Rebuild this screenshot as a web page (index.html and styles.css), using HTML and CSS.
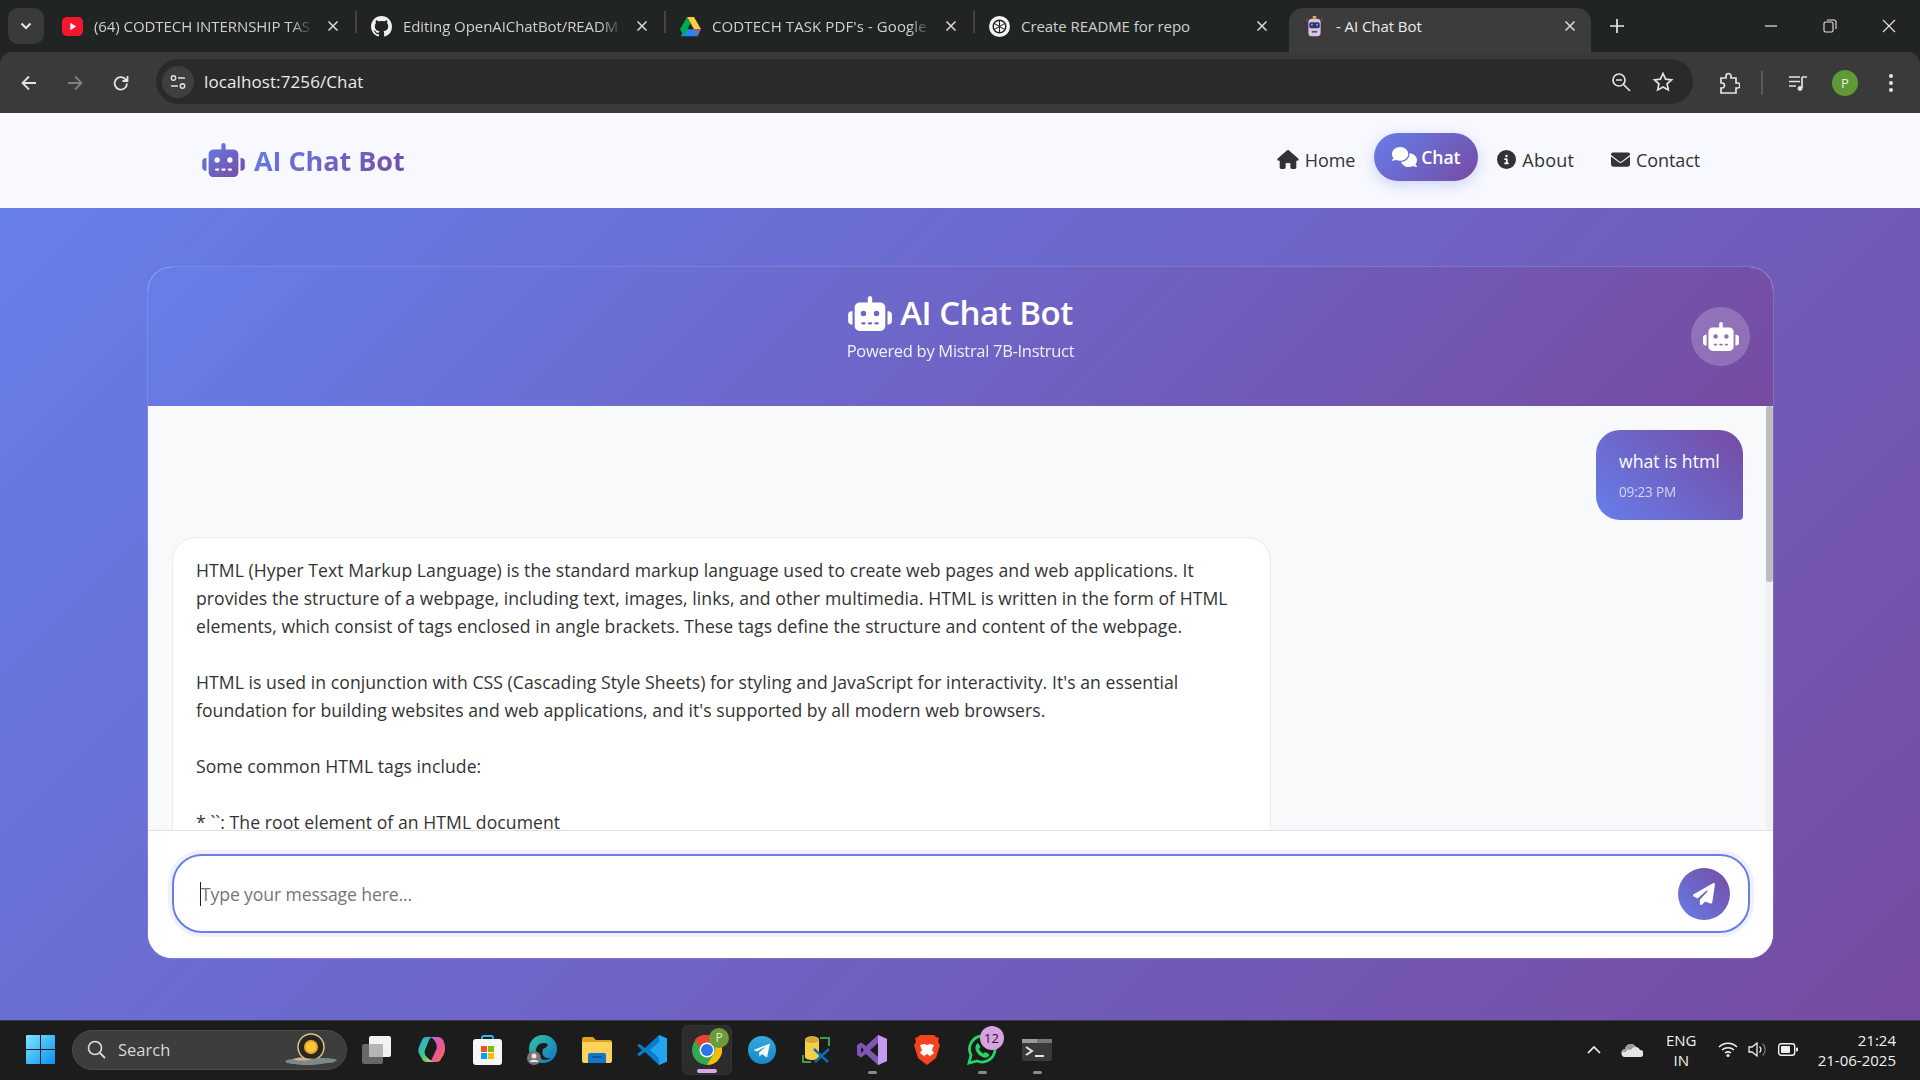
FILE: index.html
```html
<!DOCTYPE html>
<html lang="en">
<head>
<meta charset="utf-8">
<title>- AI Chat Bot</title>
<link rel="stylesheet" href="styles.css">
</head>
<body>
<svg class="defs" width="0" height="0" aria-hidden="true">
  <defs>
    <linearGradient id="brand" x1="0" y1="0" x2="1" y2="1"><stop offset="0" stop-color="#667eea"/><stop offset="1" stop-color="#764ba2"/></linearGradient>
    <symbol id="i-robot" viewBox="0 0 640 512"><path d="M320 0c17.700 0 32 14.300 32 32V96H472c39.800 0 72 32.200 72 72V440c0 39.800-32.200 72-72 72H168c-39.800 0-72-32.200-72-72V168c0-39.800 32.200-72 72-72H288V32c0-17.700 14.300-32 32-32zM208 384c-8.800 0-16 7.200-16 16s7.200 16 16 16h32c8.800 0 16-7.200 16-16s-7.200-16-16-16H208zm96 0c-8.800 0-16 7.200-16 16s7.200 16 16 16h32c8.800 0 16-7.200 16-16s-7.200-16-16-16H304zm96 0c-8.800 0-16 7.200-16 16s7.200 16 16 16h32c8.800 0 16-7.200 16-16s-7.200-16-16-16H400zM264 256a40 40 0 1 0 -80 0 40 40 0 1 0 80 0zm152 40a40 40 0 1 0 0-80 40 40 0 1 0 0 80zM48 224H64V416H48c-26.500 0-48-21.500-48-48V272c0-26.500 21.500-48 48-48zm544 0c26.500 0 48 21.500 48 48v96c0 26.500-21.500 48-48 48H576V224h16z"/></symbol>
    <symbol id="i-home" viewBox="0 0 576 512"><path d="M575.800 255.500c0 18-15 32.100-32 32.100h-32l.7 160.200c0 2.700-.2 5.400-.5 8.100V472c0 22.100-17.900 40-40 40H456c-1.100 0-2.200 0-3.300-.1c-1.400 .1-2.800 .1-4.200 .1H416 392c-22.100 0-40-17.900-40-40V448 384c0-17.700-14.300-32-32-32H256c-17.700 0-32 14.300-32 32v64 24c0 22.100-17.900 40-40 40H160 128.100c-1.500 0-3-.1-4.500-.2c-1.200 .1-2.400 .2-3.600 .2H104c-22.100 0-40-17.900-40-40V360c0-.9 0-1.900 .1-2.800V287.600H32c-18 0-32-14-32-32.100c0-9 3-17 10-24L266.400 8c7-7 15-8 22-8s15 2 21 7L564.800 231.500c8 7 12 15 11 24z"/></symbol>
    <symbol id="i-comments" viewBox="0 0 640 512"><path d="M208 352c114.900 0 208-78.800 208-176S322.900 0 208 0S0 78.800 0 176c0 38.600 14.700 74.300 39.600 103.400c-3.500 9.400-8.700 17.700-14.200 24.700c-4.800 6.200-9.700 11-13.300 14.300c-1.800 1.600-3.300 2.900-4.300 3.700c-.5 .4-.9 .7-1.100 .8l-.2 .2 0 0 0 0C1 327.200-1.400 334.400 .8 340.900S9.100 352 16 352c21.800 0 43.800-5.600 62.100-12.500c9.200-3.500 17.800-7.400 25.300-11.400C134.100 343.300 169.800 352 208 352zM448 176c0 112.300-99.100 196.900-216.500 207C255.800 457.400 336.400 512 432 512c38.200 0 73.900-8.700 104.700-23.900c7.500 4 16 7.900 25.200 11.400c18.300 6.900 40.300 12.500 62.100 12.500c6.900 0 13.100-4.500 15.200-11.100c2.100-6.600-.2-13.800-5.800-17.900l0 0 0 0-.2-.2c-.2-.2-.6-.4-1.100-.8c-1-.8-2.500-2-4.300-3.700c-3.600-3.300-8.500-8.100-13.300-14.300c-5.500-7-10.700-15.400-14.200-24.700c24.900-29 39.600-64.700 39.600-103.400c0-92.800-84.900-168.900-192.600-175.500c.4 5.100 .6 10.300 .6 15.500z"/></symbol>
    <symbol id="i-info" viewBox="0 0 512 512"><path d="M256 512A256 256 0 1 0 256 0a256 256 0 1 0 0 512zM216 336h24V272H216c-13.300 0-24-10.700-24-24s10.700-24 24-24h48c13.300 0 24 10.700 24 24v88h8c13.300 0 24 10.700 24 24s-10.700 24-24 24H216c-13.300 0-24-10.700-24-24s10.700-24 24-24zm40-208a32 32 0 1 1 0 64 32 32 0 1 1 0-64z"/></symbol>
    <symbol id="i-mail" viewBox="0 0 512 512"><path d="M48 64C21.500 64 0 85.500 0 112c0 15.100 7.100 29.300 19.200 38.400L236.800 313.600c11.400 8.500 27 8.500 38.400 0L492.800 150.400c12.100-9.100 19.200-23.300 19.200-38.400c0-26.500-21.500-48-48-48H48zM0 176V384c0 35.300 28.700 64 64 64H448c35.300 0 64-28.700 64-64V176L294.400 339.200c-22.800 17.100-54 17.100-76.800 0L0 176z"/></symbol>
    <symbol id="i-plane" viewBox="0 0 512 512"><path d="M498.100 5.600c10.100 7 15.400 19.100 13.500 31.200l-64 416c-1.500 9.700-7.400 18.200-16 23s-18.900 5.400-28 1.600L284 427.700l-68.500 74.100c-8.900 9.700-22.900 12.900-35.200 8.100S160 493.200 160 480V396.400c0-4 1.500-7.800 4.200-10.700L331.800 202.800c5.800-6.300 5.600-16-.4-22s-15.700-6.400-22-.7L106 360.800 17.700 316.600C7.100 311.300 .3 300.700 0 288.900s5.900-22.800 16.100-28.700l448-256c10.700-6.100 23.900-5.500 34 1.400z"/></symbol>
    <symbol id="i-x" viewBox="0 0 12 12"><path d="M1.500 1.500l9 9M10.500 1.500l-9 9" fill="none" stroke="currentColor" stroke-width="1.500"/></symbol>
  </defs>
</svg>

<header class="browser">
  <div class="tabstrip">
    <div class="tab-search"><svg width="12" height="8" viewBox="0 0 12 8"><path d="M1.500 1.500L6 6l4.500-4.500" fill="none" stroke="#e8e8e8" stroke-width="2"/></svg></div>
    <div class="tab">
      <svg class="fav" viewBox="0 0 20 20"><rect y="1" width="20" height="18" rx="4.500" fill="#f4162c"/><path d="M8 6.500l5.500 3.500L8 13.500z" fill="#fff"/></svg>
      <span class="tab-title">(64) CODTECH INTERNSHIP TAS</span>
      <svg class="tab-x"><use href="#i-x"/></svg>
    </div>
    <div class="tab">
      <svg class="fav" viewBox="0 0 16 16"><path fill="#f0f0f0" d="M8 0C3.580 0 0 3.580 0 8c0 3.540 2.290 6.530 5.470 7.590.4.070.55-.17.55-.38 0-.19-.01-.82-.01-1.490-2.010.37-2.530-.49-2.690-.94-.09-.23-.48-.94-.82-1.130-.28-.15-.68-.52-.01-.53.63-.01 1.080.58 1.230.82.720 1.210 1.870.87 2.330.66.070-.52.280-.87.510-1.070-1.780-.2-3.640-.89-3.640-3.950 0-.87.310-1.590.820-2.150-.080-.2-.360-1.020.080-2.120 0 0 .670-.21 2.200.820.640-.18 1.320-.27 2-.27s1.360.090 2 .27c1.530-1.040 2.200-.82 2.200-.82.440 1.100.160 1.920.080 2.120.510.560.820 1.270.820 2.150 0 3.070-1.870 3.750-3.650 3.950.290.250.540.730.540 1.480 0 1.070-.010 1.930-.010 2.200 0 .210.150.460.550.380A8.010 8.010 0 0 0 16 8c0-4.420-3.580-8-8-8z"/></svg>
      <span class="tab-title">Editing OpenAIChatBot/READM</span>
      <svg class="tab-x"><use href="#i-x"/></svg>
    </div>
    <div class="tab">
      <svg class="fav" viewBox="0 0 24 22"><path fill="#ffcd40" d="M8 0h8l8 14h-8z"/><path fill="#2684fc" d="M5 14h19l-4 8H1z"/><path fill="#00ac47" d="M8 0l4 7-7 15-5-8z"/><path fill="#ea4335" d="M24 14l-4 8-5-8z" opacity=".5"/></svg>
      <span class="tab-title tab-title-wide">CODTECH TASK PDF's - Google</span>
      <svg class="tab-x"><use href="#i-x"/></svg>
    </div>
    <div class="tab tab-last">
      <svg class="fav" viewBox="0 0 20 20"><circle cx="10" cy="10" r="10" fill="#f4f4f4"/><circle cx="10" cy="10" r="6" fill="none" stroke="#222" stroke-width="1.400"/><path d="M10 4v12M4.800 7l10.400 6M15.200 7L4.800 13" stroke="#222" stroke-width="1"/></svg>
      <span class="tab-title">Create README for repo</span>
      <svg class="tab-x"><use href="#i-x"/></svg>
    </div>
    <div class="tab tab-active">
      <svg class="fav" viewBox="0 0 20 24"><rect x="8" y="0" width="4" height="3" fill="#e0b040"/><rect x="3" y="3" width="14" height="20" rx="4" fill="#d9c3ec"/><rect x="4" y="7" width="12" height="7" rx="2" fill="#2b3a6b"/><rect x="6" y="9" width="2" height="2" fill="#7ad"/><rect x="12" y="9" width="2" height="2" fill="#7ad"/><rect x="7" y="17" width="6" height="2" fill="#555"/><rect x="1" y="2" width="1" height="4" fill="#c33"/><rect x="18" y="2" width="1" height="4" fill="#c33"/></svg>
      <span class="tab-title">- AI Chat Bot</span>
      <svg class="tab-x"><use href="#i-x"/></svg>
    </div>
    <div class="tab-new"><svg width="14" height="14" viewBox="0 0 14 14"><path d="M7 0v14M0 7h14" stroke="#e6e6e6" stroke-width="1.700"/></svg></div>
    <div class="win-controls">
      <svg width="12" height="12" viewBox="0 0 12 12"><path d="M0 6h12" stroke="#e6e6e6" stroke-width="1.200"/></svg>
      <svg width="14" height="14" viewBox="0 0 14 14"><rect x="1" y="3" width="9" height="10" rx="1.500" fill="none" stroke="#e6e6e6" stroke-width="1.100"/><path d="M4 1h7a2 2 0 0 1 2 2v7" fill="none" stroke="#e6e6e6" stroke-width="1.100"/></svg>
      <svg width="14" height="14" viewBox="0 0 14 14"><path d="M1 1l12 12M13 1L1 13" stroke="#e6e6e6" stroke-width="1.100"/></svg>
    </div>
  </div>
  <div class="toolbar">
    <div class="nav-btns">
      <svg width="20" height="20" viewBox="0 0 20 20"><path d="M17 10H4M10 3.500L3.500 10l6.500 6.500" fill="none" stroke="#e3e3e3" stroke-width="1.800"/></svg>
      <svg width="20" height="20" viewBox="0 0 20 20"><path d="M3 10h13M10 3.500l6.500 6.500-6.500 6.500" fill="none" stroke="#808080" stroke-width="1.800"/></svg>
      <svg width="20" height="20" viewBox="0 0 20 20"><path d="M16 10.500a6.200 6.200 0 1 1-1.800-4.500L16.500 8M16.500 3v5h-5" fill="none" stroke="#e3e3e3" stroke-width="1.800"/></svg>
    </div>
    <div class="omnibox">
      <div class="site-info"><svg width="18" height="18" viewBox="0 0 18 18"><circle cx="4.500" cy="5" r="2.200" fill="none" stroke="#e3e3e3" stroke-width="1.400"/><path d="M9 5h7M2 13h7" stroke="#e3e3e3" stroke-width="1.400"/><circle cx="13.500" cy="13" r="2.200" fill="none" stroke="#e3e3e3" stroke-width="1.400"/></svg></div>
      <span class="url">localhost:7256/Chat</span>
      <div class="omni-end">
        <svg width="22" height="22" viewBox="0 0 22 22"><circle cx="9" cy="9" r="6" fill="none" stroke="#e3e3e3" stroke-width="1.700"/><path d="M13.500 13.500L20 20M6 9h6" stroke="#e3e3e3" stroke-width="1.700"/></svg>
        <svg width="22" height="22" viewBox="0 0 22 22"><path d="M11 2.500l2.600 5.600 6 .7-4.500 4.100 1.200 6L11 16l-5.300 2.900 1.200-6L2.400 8.800l6-.7z" fill="none" stroke="#e3e3e3" stroke-width="1.700"/></svg>
      </div>
    </div>
    <div class="tool-end">
      <svg class="t-ext" width="22" height="22" viewBox="0 0 22 22"><path d="M3 6h5V4a2.500 2.500 0 0 1 5 0v2h5v5h1.500a2.500 2.500 0 0 1 0 5H18v5H3v-5h1a2.500 2.500 0 0 0 0-5H3z" fill="none" stroke="#e3e3e3" stroke-width="1.700"/></svg>
      <span class="t-sep"></span>
      <svg class="t-media" width="20" height="20" viewBox="0 0 20 20"><path d="M1 4h11M1 8.500h11M1 13h7M14 4v11M14 4h5" fill="none" stroke="#e3e3e3" stroke-width="1.700"/><circle cx="12" cy="15.500" r="2.400" fill="#e3e3e3"/></svg>
      <span class="avatar">P</span>
      <svg class="t-menu" width="6" height="20" viewBox="0 0 6 20"><circle cx="3" cy="3" r="2" fill="#e3e3e3"/><circle cx="3" cy="10" r="2" fill="#e3e3e3"/><circle cx="3" cy="17" r="2" fill="#e3e3e3"/></svg>
    </div>
  </div>
</header>

<nav class="navbar">
  <div class="brand">
    <svg class="brand-icon" fill="url(#brand)" viewBox="0 0 640 512"><path d="M320 0c17.700 0 32 14.300 32 32V96H472c39.800 0 72 32.200 72 72V440c0 39.800-32.200 72-72 72H168c-39.800 0-72-32.200-72-72V168c0-39.800 32.200-72 72-72H288V32c0-17.700 14.300-32 32-32zM208 384c-8.800 0-16 7.200-16 16s7.200 16 16 16h32c8.800 0 16-7.200 16-16s-7.200-16-16-16H208zm96 0c-8.800 0-16 7.200-16 16s7.200 16 16 16h32c8.800 0 16-7.200 16-16s-7.200-16-16-16H304zm96 0c-8.800 0-16 7.200-16 16s7.200 16 16 16h32c8.800 0 16-7.200 16-16s-7.200-16-16-16H400zM264 256a40 40 0 1 0 -80 0 40 40 0 1 0 80 0zm152 40a40 40 0 1 0 0-80 40 40 0 1 0 0 80zM48 224H64V416H48c-26.500 0-48-21.500-48-48V272c0-26.500 21.500-48 48-48zm544 0c26.500 0 48 21.500 48 48v96c0 26.500-21.500 48-48 48H576V224h16z"/></svg>
    <span class="brand-text">AI Chat Bot</span>
  </div>
  <ul class="nav-links">
    <li class="nav-link"><svg class="nl-icon ni-home"><use href="#i-home"/></svg>Home</li>
    <li class="nav-link is-active"><svg class="nl-icon ni-chat"><use href="#i-comments"/></svg>Chat</li>
    <li class="nav-link nav-about"><svg class="nl-icon ni-info"><use href="#i-info"/></svg>About</li>
    <li class="nav-link"><svg class="nl-icon ni-mail"><use href="#i-mail"/></svg>Contact</li>
  </ul>
</nav>

<main class="stage">
  <section class="card">
    <div class="card-head">
      <h1 class="card-title"><svg class="title-icon"><use href="#i-robot"/></svg>AI Chat Bot</h1>
      <p class="card-sub">Powered by Mistral 7B-Instruct</p>
      <div class="bot-avatar"><svg class="bot-avatar-icon"><use href="#i-robot"/></svg></div>
    </div>
    <div class="thread">
      <div class="messages">
        <div class="msg msg-user">
          <div class="msg-text">what is html</div>
          <div class="msg-time">09:23 PM</div>
        </div>
        <div class="msg msg-bot">
          <p class="bot-text">HTML (Hyper Text Markup Language) is the standard markup language used to create web pages and web applications. It<br>provides the structure of a webpage, including text, images, links, and other multimedia. HTML is written in the form of HTML<br>elements, which consist of tags enclosed in angle brackets. These tags define the structure and content of the webpage.<br><br>HTML is used in conjunction with CSS (Cascading Style Sheets) for styling and JavaScript for interactivity. It's an essential<br>foundation for building websites and web applications, and it's supported by all modern web browsers.<br><br>Some common HTML tags include:<br><br>* ``: The root element of an HTML document</p>
        </div>
      </div>
      <div class="scroll-track"><div class="scroll-thumb"></div></div>
    </div>
    <form class="composer">
      <div class="composer-box">
        <span class="caret"></span>
        <input class="composer-input" type="text" placeholder="Type your message here...">
        <button class="send" type="button" aria-label="Send"><svg class="send-icon"><use href="#i-plane"/></svg></button>
      </div>
    </form>
  </section>
</main>

<footer class="taskbar">
  <div class="tb-cell">
    <svg width="29" height="29" viewBox="0 0 29 29"><defs><linearGradient id="win" x1="0" y1="0" x2="1" y2="1"><stop offset="0" stop-color="#7fe6ff"/><stop offset="1" stop-color="#0a90ee"/></linearGradient></defs><path fill="url(#win)" d="M0 1a1 1 0 0 1 1-1h13v14H0zM15 0h13a1 1 0 0 1 1 1v13H15zM0 15h14v14H1a1 1 0 0 1-1-1zM15 15h14v13a1 1 0 0 1-1 1H15z"/></svg>
  </div>
  <div class="tb-search">
    <svg width="19" height="19" viewBox="0 0 19 19"><circle cx="8" cy="8" r="6.500" fill="none" stroke="#ddd" stroke-width="1.600"/><path d="M12.800 12.800L18 18" stroke="#ddd" stroke-width="1.800"/></svg>
    <span class="tb-search-text">Search</span>
    <svg class="tb-sun" width="54" height="34" viewBox="0 0 54 34"><circle cx="27" cy="14" r="13" fill="#2a2622" stroke="#dcc08e" stroke-width="1.500"/><circle cx="27" cy="14" r="7" fill="#f5a623"/><circle cx="27" cy="14" r="5" fill="#ffc83d"/><path d="M1 28c6-3 11-1 16-3 5 3 10-1 14 1 5-2 9 0 13-1 3 1 6 0 9 2-3 3-7 3-10 3-9 2-25 3-32 1-4 0-8 0-10-3z" fill="#7d8a8c"/><path d="M8 26c5-1 9-2 12-1l8 1c-5 2-14 2-20 0z" fill="#d2b48c"/></svg>
  </div>
  <div class="tb-cell tb-after">
    <svg width="30" height="28" viewBox="0 0 30 28"><rect x="0" y="8" width="21" height="20" rx="2" fill="#686868"/><rect x="7" y="0" width="22" height="21" rx="2" fill="#f2f2f2"/><rect x="7" y="8" width="14" height="13" fill="#b5b5b5"/></svg>
  </div>
  <div class="tb-cell">
    <svg width="28" height="27" viewBox="0 0 28 27"><defs><linearGradient id="cp1" x1="0" y1="0" x2="1" y2="1"><stop offset="0" stop-color="#2f9cf0"/><stop offset=".5" stop-color="#35c98f"/><stop offset="1" stop-color="#f5c542"/></linearGradient><linearGradient id="cp2" x1="0" y1="0" x2="1" y2="1"><stop offset="0" stop-color="#b866e8"/><stop offset=".6" stop-color="#f0558a"/><stop offset="1" stop-color="#f58a3c"/></linearGradient></defs><path fill="url(#cp2)" d="M13 1h7c3 0 5 2 6 5 1.500 4 1.500 9-.5 13l-2 3c-1 3-3 4-5 4h-6l6-13c1-4-1-9-6-12z"/><path fill="url(#cp1)" d="M8 1h7c-2 0-3 1-4 3L7 14c-1 3 0 6 3 8 1 1 3 3 6 4H9c-3 0-5-2-6-5-1-2-4-5-2-10 1-3 2-5 3-7 1-2 2-3 4-3z"/></svg>
  </div>
  <div class="tb-cell">
    <svg width="29" height="30" viewBox="0 0 29 30"><path d="M9 5V2.500A1.500 1.500 0 0 1 10.500 1h8A1.500 1.500 0 0 1 20 2.500V5" fill="none" stroke="#35b6f2" stroke-width="1.800"/><rect y="4" width="29" height="26" rx="3" fill="#f6f6f6"/><rect x="8" y="11" width="6" height="6" fill="#f25022"/><rect x="15" y="11" width="6" height="6" fill="#7fba00"/><rect x="8" y="18" width="6" height="6" fill="#00a4ef"/><rect x="15" y="18" width="6" height="6" fill="#ffb900"/></svg>
  </div>
  <div class="tb-cell">
    <svg width="30" height="30" viewBox="0 0 30 30"><defs><linearGradient id="edg" x1="0" y1="0" x2="1" y2="1"><stop offset="0" stop-color="#36c6a0"/><stop offset="1" stop-color="#1272c9"/></linearGradient></defs><circle cx="16" cy="14" r="14" fill="url(#edg)"/><path d="M16 14c7-3 5-6 1-6-6 0-9 5-8 10 1 6 9 9 15 5-6 1-10-2-8-9z" fill="#1c1c1c"/><circle cx="7" cy="23" r="7" fill="#777"/><circle cx="7" cy="21" r="2.500" fill="#e8e8e8"/><path d="M2.500 27c1-3 8-3 9 0z" fill="#e8e8e8"/></svg>
  </div>
  <div class="tb-cell">
    <svg width="30" height="27" viewBox="0 0 30 27"><path d="M0 3a2 2 0 0 1 2-2h9l3 3h14a2 2 0 0 1 2 2v3H0z" fill="#d9a31f"/><path d="M0 6h30v19a2 2 0 0 1-2 2H2a2 2 0 0 1-2-2z" fill="#fbd35c"/><path d="M6 19a2 2 0 0 1 2-2h14a2 2 0 0 1 2 2v8H6z" fill="#1177cc"/><path d="M10 21h10" stroke="#0c4f8f" stroke-width="1.500"/></svg>
  </div>
  <div class="tb-cell">
    <svg width="30" height="30" viewBox="0 0 30 30"><path d="M22 0l8 3.500v23L22 30 8 17l-5.500 4L0 19.500 5 15 0 10.500 2.500 9l5.500 4z" fill="#0a7cc9"/><path d="M22 0l8 3.500v23L22 30zM22 7l-9 8 9 8z" fill="#23a5ee" fill-rule="evenodd"/></svg>
  </div>
  <div class="tb-cell tb-running is-open">
    <svg width="30" height="30" viewBox="0 0 30 30"><circle cx="15" cy="15" r="15" fill="#34a853"/><path d="M15 0a15 15 0 0 1 13 7.500H15a7.500 7.500 0 0 0-7 5L2.500 5A15 15 0 0 1 15 0z" fill="#ea4335"/><path d="M28 7.500A15 15 0 0 1 15 30l6.500-11A7.500 7.500 0 0 0 20 7.500z" fill="#fbbc05"/><circle cx="15" cy="15" r="7.500" fill="#fff"/><circle cx="15" cy="15" r="6" fill="#2a73e8"/></svg>
    <span class="tb-badge tb-badge-p">P</span>
  </div>
  <div class="tb-cell">
    <svg width="28" height="28" viewBox="0 0 28 28"><defs><linearGradient id="tg" x1="0" y1="0" x2="0" y2="1"><stop offset="0" stop-color="#36a9e1"/><stop offset="1" stop-color="#1688c7"/></linearGradient></defs><circle cx="14" cy="14" r="14" fill="url(#tg)"/><path d="M5.500 14L22 7.500l-3 14-5-3.500-2.500 2.500-.5-4 7-6-9 5z" fill="#f3f8fc"/></svg>
  </div>
  <div class="tb-cell">
    <svg width="30" height="30" viewBox="0 0 30 30"><path d="M18 3h9v8M9 27H1v-7" fill="none" stroke="#3f9d46" stroke-width="2"/><path d="M3 5c0-5 14-5 14 0v17c0 4-14 4-14 0z" fill="#f4cf48"/><path d="M3 5c0 4 14 4 14 0s-14-4-14 0z" fill="#d6a638"/><path d="M12 14l14 13M27 14L13 27" stroke="#0a6db5" stroke-width="2.400"/></svg>
  </div>
  <div class="tb-cell tb-running">
    <svg width="30" height="30" viewBox="0 0 30 30"><path d="M21 0l9 4v22l-9 4-12-11-5 3.500L0 20V10l4-2.500L9 11z" fill="#7e57b5"/><path d="M21 0l9 4v22l-9 4z" fill="#c39bf0"/><path d="M21 8l-8 7 8 7zM4 12v6l3-3z" fill="#1c1c1c"/></svg>
  </div>
  <div class="tb-cell">
    <svg width="26" height="30" viewBox="0 0 26 30"><path d="M6 0h14l2 2 3 1-1 4 2 3-4 13-9 7-9-7-4-13 2-3-1-4 3-1z" fill="#f5431f"/><path d="M6 10l4-1 3 1 3-1 4 1-2 5 2 3-4 3-3 3-3-3-4-3 2-3z" fill="#fff"/><path d="M10 21l3-2 3 2-3 4z" fill="#f5431f"/></svg>
  </div>
  <div class="tb-cell tb-running">
    <svg width="31" height="31" viewBox="0 0 31 31"><path d="M15.500 2A13 13 0 0 0 4 21L2 29l8-2A13 13 0 1 0 15.500 2z" fill="none" stroke="#25d366" stroke-width="2.800"/><path d="M11 9l2.500 4-1.500 2c1 2 2.500 3.500 4.500 4.500l2-1.500 4 2.500c-1 3-3 3.500-5.500 3-4-1-7.500-4.500-8.500-8.500-.5-3 1-5.500 2.500-6z" fill="#25d366"/></svg>
    <span class="tb-badge tb-badge-n">12</span>
  </div>
  <div class="tb-cell tb-running">
    <svg width="30" height="22" viewBox="0 0 30 22"><rect width="30" height="22" rx="2" fill="#3a3a3a"/><rect width="30" height="4" fill="#9a9a9a"/><rect x="15" width="15" height="4" fill="#777"/><path d="M4 8l6 4-6 4" fill="none" stroke="#e6e6e6" stroke-width="2"/><path d="M13 17h9" stroke="#e6e6e6" stroke-width="2"/></svg>
  </div>
  <div class="tray">
    <svg class="tray-chev" width="16" height="10" viewBox="0 0 16 10"><path d="M2 8l6-6 6 6" fill="none" stroke="#f0f0f0" stroke-width="1.700"/></svg>
    <svg class="tray-cloud" width="22" height="14" viewBox="0 0 22 14"><path d="M5 14a4 4 0 0 1-1-8 6 6 0 0 1 11-2 4.500 4.500 0 0 1 4 3 3.500 3.500 0 0 1 0 7z" fill="#e4e4e4"/><path d="M4 6a6 6 0 0 1 11-2 5 5 0 0 0-5 3C7 6 5 7 5 9H1c0-1 1-3 3-3z" fill="#9b9b9b"/></svg>
    <div class="tray-lang"><span>ENG</span><span>IN</span></div>
    <svg class="tray-wifi" width="20" height="15" viewBox="0 0 20 15"><path d="M1 5c5-5 13-5 18 0M4 8c3.500-3 8.500-3 12 0M7 11c2-1.500 4-1.500 6 0" fill="none" stroke="#f0f0f0" stroke-width="1.500"/><circle cx="10" cy="13.500" r="1.500" fill="#f0f0f0"/></svg>
    <svg class="tray-vol" width="20" height="17" viewBox="0 0 20 17"><path d="M1 6h3l5-4v13l-5-4H1z" fill="none" stroke="#f0f0f0" stroke-width="1.300"/><path d="M11.500 5.500a4 4 0 0 1 0 6" fill="none" stroke="#f0f0f0" stroke-width="1.300"/><path d="M14.500 2.500a8 8 0 0 1 0 12" fill="none" stroke="#777" stroke-width="1.300"/></svg>
    <svg class="tray-batt" width="20" height="13" viewBox="0 0 20 13"><rect x=".7" y=".7" width="16" height="11.600" rx="2.500" fill="none" stroke="#f0f0f0" stroke-width="1.400"/><rect x="3" y="3" width="9" height="7" rx="1" fill="#f0f0f0"/><rect x="18" y="4.500" width="2" height="4" rx="1" fill="#f0f0f0"/></svg>
    <div class="tray-clock"><span>21:24</span><span>21-06-2025</span></div>
  </div>
</footer>
</body>
</html>
```

FILE: styles.css
```css
* { box-sizing: border-box; }
html, body { margin: 0; padding: 0; height: 100%; }
body {
  width: 1920px;
  height: 1080px;
  overflow: hidden;
  display: flex;
  flex-direction: column;
  font-family: "Open Sans", "Noto Sans", "Liberation Sans", sans-serif;
}
.defs { position: absolute; }

/* browser chrome */
.browser { flex: 0 0 113px; background: #202423; display: flex; flex-direction: column; color: #e3e3e3; }
.tabstrip { height: 52px; display: flex; align-items: flex-end; padding-left: 8px; }
.tab-search { width: 36px; height: 36px; margin-bottom: 8px; margin-right: 4px; border-radius: 10px; background: #3a3a3a; display: flex; align-items: center; justify-content: center; }
.tab { width: 309px; height: 44px; display: flex; align-items: center; padding: 0 18px 8px 14px; flex: none; position: relative; font-size: 15px; letter-spacing: -0.07px; color: #cfd0d0; }
.tab::after { content: ""; position: absolute; right: 0; top: 3px; height: 22px; width: 2px; background: #444; }
.tab.tab-last { width: 314px; padding-right: 21px; }
.tab.tab-last::after, .tab.tab-active::after { display: none; }
.tab-active { width: 302px; background: #3c3c3c; border-radius: 14px 14px 0 0; padding-left: 15px; padding-right: 15px; color: #ececec; }
.fav { width: 21px; height: 21px; flex: none; margin-right: 11px; }
.tab-title { flex: 1; overflow: hidden; white-space: nowrap; -webkit-mask-image: linear-gradient(90deg, #000 90%, transparent 100%); mask-image: linear-gradient(90deg, #000 90%, transparent 100%); }
.tab-title-wide { letter-spacing: 0.1px; }
.tab-active .tab-title, .tab-last .tab-title { -webkit-mask-image: none; mask-image: none; }
.tab-x { width: 12px; height: 12px; flex: none; margin-left: 14px; color: #dcdcdc; }
.tab-new { width: 52px; height: 44px; display: flex; align-items: center; justify-content: center; padding-bottom: 8px; }
.win-controls { margin-left: auto; width: 180px; height: 44px; display: flex; align-items: center; justify-content: space-between; padding: 0 24px 8px 25px; }

.toolbar { flex: 1; background: #3a3a3a; border-radius: 12px 12px 0 0; display: flex; align-items: center; padding-left: 19px; }
.nav-btns { display: flex; gap: 26px; width: 137px; align-items: center; }
.omnibox { width: 1537px; height: 45px; margin-top: -2px; border-radius: 23px; background: #2a2a2a; display: flex; align-items: center; padding-left: 6px; padding-right: 19px; }
.site-info { width: 32px; height: 32px; border-radius: 50%; background: #3f3f3f; display: flex; align-items: center; justify-content: center; margin-right: 10px; }
.url { font-size: 17px; letter-spacing: 0.1px; color: #ececec; }
.omni-end { margin-left: auto; display: flex; align-items: center; gap: 20px; }
.tool-end { flex: 1; display: flex; align-items: center; padding-left: 25px; }
.t-ext { margin-right: 21px; }
.t-sep { width: 2px; height: 24px; background: #5a5a5a; margin-right: 25px; }
.t-media { margin-right: 24px; }
.avatar { width: 26px; height: 26px; border-radius: 50%; background: #5f9a36; color: #e9f3df; font-size: 13px; display: flex; align-items: center; justify-content: center; margin-right: 30px; }

/* page */
.navbar { flex: 0 0 95px; background: #f8f9ff; display: flex; align-items: center; justify-content: space-between; padding: 0 202px 2px 202px; }
.brand { display: flex; align-items: center; gap: 9px; }
.brand-icon { width: 43px; height: 34px; display: block; }
.brand-text { font-size: 27px; font-weight: 700; letter-spacing: -0.05px; margin-top: 1px; background: linear-gradient(135deg, #667eea, #764ba2); -webkit-background-clip: text; background-clip: text; color: transparent; }
.nav-links { list-style: none; margin: 0; padding: 0; display: flex; gap: 1px; }
.nav-link { height: 48px; padding: 0 18px; display: flex; align-items: center; gap: 6px; color: #333; font-size: 18px; font-weight: 500; letter-spacing: -0.1px; fill: #333; }
.nav-about { letter-spacing: 0.2px; }
.is-active { color: #fff; fill: #fff; font-size: 17.6px; font-weight: 600; letter-spacing: -0.1px; gap: 4px; border-radius: 24px; background: linear-gradient(135deg, #667eea, #764ba2); box-shadow: 0 4px 15px rgba(102, 126, 234, .3); margin-top: -2.500px; }
.nl-icon { display: block; }
.ni-home { width: 22px; height: 19px; }
.ni-chat { width: 25px; height: 20px; }
.ni-info { width: 19px; height: 19px; }
.ni-mail { width: 19px; height: 19px; }

.stage { flex: 1; min-height: 0; background: linear-gradient(135deg, #667eea 0%, #764ba2 100%); padding: 59px 147px 62px 148px; display: flex; }
.card { flex: 1; min-width: 0; display: flex; flex-direction: column; background: #fff; border-radius: 24px; overflow: hidden; box-shadow: 0 0 0 1px rgba(255, 255, 255, .12); }
.card-head { flex: 0 0 139px; position: relative; background: linear-gradient(135deg, #667eea, #764ba2); color: #fff; display: flex; flex-direction: column; align-items: center; padding-top: 25px; }
.card-title { margin: 0; font-size: 33px; font-weight: 600; line-height: 42px; letter-spacing: -0.5px; display: flex; align-items: center; gap: 8px; }
.title-icon { width: 44px; height: 35px; fill: #fff; display: block; }
.card-sub { margin: 5px 0 0; font-size: 16.5px; line-height: 24px; letter-spacing: -0.3px; opacity: .9; }
.bot-avatar { position: absolute; right: 23px; top: 40px; width: 59px; height: 59px; border-radius: 50%; background: rgba(255, 255, 255, .2); display: flex; align-items: center; justify-content: center; }
.bot-avatar-icon { width: 36px; height: 29px; fill: #fff; }

.thread { flex: 1; min-height: 0; position: relative; }
.messages { height: 100%; overflow: hidden; background: #f8f9fa; padding: 24px 30px 24px 24px; display: flex; flex-direction: column; }
.scroll-track { position: absolute; top: 0; right: 0; bottom: 0; width: 7px; background: #f1f1f1; }
.scroll-thumb { height: 176px; background: #bdbdbd; border-radius: 3px; }
.msg { flex: none; }
.msg-user { align-self: flex-end; padding: 17px 23px 0; height: 90px; width: 147px; border-radius: 24px 24px 4px 24px; background: linear-gradient(45deg, #667eea, #764ba2); color: #fff; white-space: nowrap; }
.msg-text { font-size: 17.6px; line-height: 28px; letter-spacing: 0.05px; }
.msg-time { font-size: 13.6px; line-height: 22px; letter-spacing: -0.2px; opacity: .7; margin-top: 6px; }
.msg-bot { margin-top: 17px; width: 1099px; min-height: 866px; border: 1px solid #e9ecef; border-radius: 24px; background: #fff; padding: 18px 23px; }
.bot-text { margin: 0; font-size: 17.6px; line-height: 28px; letter-spacing: 0.06px; color: #333; white-space: nowrap; }

.composer { flex: 0 0 128px; border-top: 1px solid #e1e3e8; background: #fff; padding: 23px 23px 0 24px; }
.composer-box { position: relative; height: 79px; border: 2px solid #667eea; border-radius: 30px; box-shadow: 0 0 0 4px rgba(102, 126, 234, .1); display: flex; align-items: center; padding: 0 18px 0 27px; }
.composer-input { flex: 1; border: 0; outline: 0; background: transparent; font: inherit; font-size: 17.6px; letter-spacing: -0.12px; padding: 0; color: #333; }
.composer-input::placeholder { color: #757575; opacity: 1; }
.caret { position: absolute; left: 26px; top: 26px; width: 1px; height: 24px; background: #222; }
.send { width: 52px; height: 52px; border: 0; border-radius: 50%; padding: 0; background: linear-gradient(45deg, #667eea, #764ba2); display: flex; align-items: center; justify-content: center; margin-left: 12px; flex: none; }
.send-icon { width: 22px; height: 22px; fill: #fff; }

/* taskbar */
.taskbar { flex: 0 0 60px; background: #1c1c1c; border-top: 1px solid #3b3b44; display: flex; align-items: center; padding: 0 0 2px 13px; color: #f0f0f0; }
.tb-cell { width: 55px; height: 50px; flex: none; display: flex; align-items: center; justify-content: center; position: relative; }
.tb-search { width: 275px; height: 40px; margin-left: 4px; flex: none; border-radius: 20px; background: #3d3d3d; border: 1px solid #4a4a4a; display: flex; align-items: center; padding-left: 14px; position: relative; }
.tb-search-text { margin-left: 12px; font-size: 16.5px; color: #d8d8d8; }
.tb-sun { position: absolute; right: 8px; top: 2px; }
.tb-after { margin-left: 2.500px; }
.tb-running::after { content: ""; position: absolute; left: 50%; bottom: 1px; width: 9px; height: 3px; margin-left: -4px; border-radius: 2px; background: #8a8a8a; }
.is-open { background: #2c2c2c; border: 1px solid #343434; border-radius: 6px; width: 50px; margin: 0 2.500px; }
.is-open::after { width: 20px; margin-left: -10px; background: #d9a6e6; bottom: 1px; height: 4px; }
.tb-badge { position: absolute; border-radius: 50%; display: flex; align-items: center; justify-content: center; }
.tb-badge-p { width: 20px; height: 20px; left: 26px; top: 2px; background: #6f9a3a; color: #dfeacc; font-size: 12px; }
.tb-badge-n { width: 24px; height: 24px; left: 25px; top: 1px; background: #d8a2e0; color: #1c1c1c; font-size: 13px; }
.tray { margin-left: auto; display: flex; align-items: center; padding-right: 24px; font-size: 15px; line-height: 20px; }
.tray-chev { margin-right: 19px; }
.tray-cloud { margin-right: 22.500px; }
.tray-lang { display: flex; flex-direction: column; align-items: center; width: 32px; margin-right: 21px; }
.tray-wifi { margin-right: 10px; }
.tray-vol { margin-right: 10px; }
.tray-batt { margin-right: 19.500px; }
.tray-clock { display: flex; flex-direction: column; align-items: flex-end; }
```
